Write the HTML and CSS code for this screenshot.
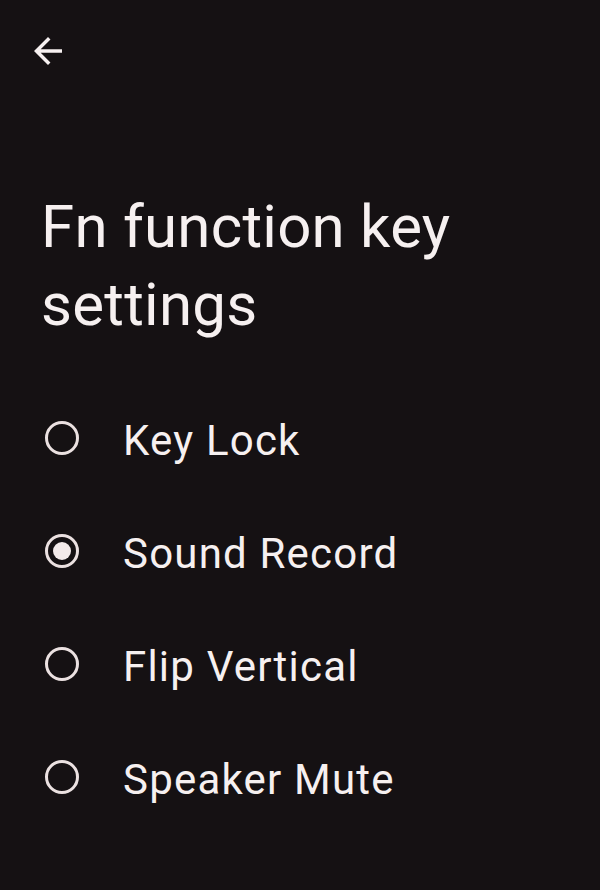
FILE: index.html
```html
<!DOCTYPE html>
<html lang="en">
<head>
<meta charset="utf-8">
<title>Fn function key settings</title>
<link rel="stylesheet" href="styles.css">
</head>
<body>
<div class="screen">
  <header class="topbar">
    <button class="back" aria-label="Back">
      <svg viewBox="0 0 24 24" width="42" height="42" aria-hidden="true">
        <path d="M20 11H7.83l5.59-5.59L12 4l-8 8 8 8 1.41-1.41L7.83 13H20v-2z" fill="#f6f0f0"/>
      </svg>
    </button>
  </header>
  <h1 class="title">Fn function key settings</h1>
  <ul class="options">
    <li class="option"><span class="radio"></span><span class="label">Key Lock</span></li>
    <li class="option"><span class="radio checked"></span><span class="label">Sound Record</span></li>
    <li class="option"><span class="radio"></span><span class="label">Flip Vertical</span></li>
    <li class="option"><span class="radio"></span><span class="label">Speaker Mute</span></li>
  </ul>
</div>
</body>
</html>
```

FILE: styles.css
```css
html, body {
  margin: 0;
  padding: 0;
  background: #151113;
}
.screen {
  width: 600px;
  height: 890px;
  background: #151113;
  color: #f6f0f0;
  font-family: Roboto, "Noto Sans", sans-serif;
  overflow: hidden;
}
.topbar {
  height: 90px;
  padding: 30px 0 0 27px;
  box-sizing: border-box;
}
.back {
  display: block;
  width: 42px;
  height: 42px;
  padding: 0;
  border: 0;
  background: none;
}
.back svg { display: block; }
.title {
  margin: 98px 0 0 0;
  padding: 0 30px 0 41px;
  font-size: 60px;
  font-weight: 400;
  line-height: 78px;
  letter-spacing: 0.25px;
}
.options {
  list-style: none;
  margin: 37px 0 0 0;
  padding: 0;
}
.option {
  height: 113px;
  display: flex;
  align-items: center;
  padding-left: 45px;
}
.radio {
  width: 34px;
  height: 34px;
  box-sizing: border-box;
  border: 3px solid #ebe1e1;
  border-radius: 50%;
  flex: none;
  display: flex;
  align-items: center;
  justify-content: center;
}
.radio.checked::after {
  content: "";
  width: 18px;
  height: 18px;
  border-radius: 50%;
  background: #f3eaea;
}
.label {
  margin-left: 44px;
  font-size: 42px;
  line-height: 50px;
  letter-spacing: 1.2px;
  position: relative;
  top: 3px;
}
```
